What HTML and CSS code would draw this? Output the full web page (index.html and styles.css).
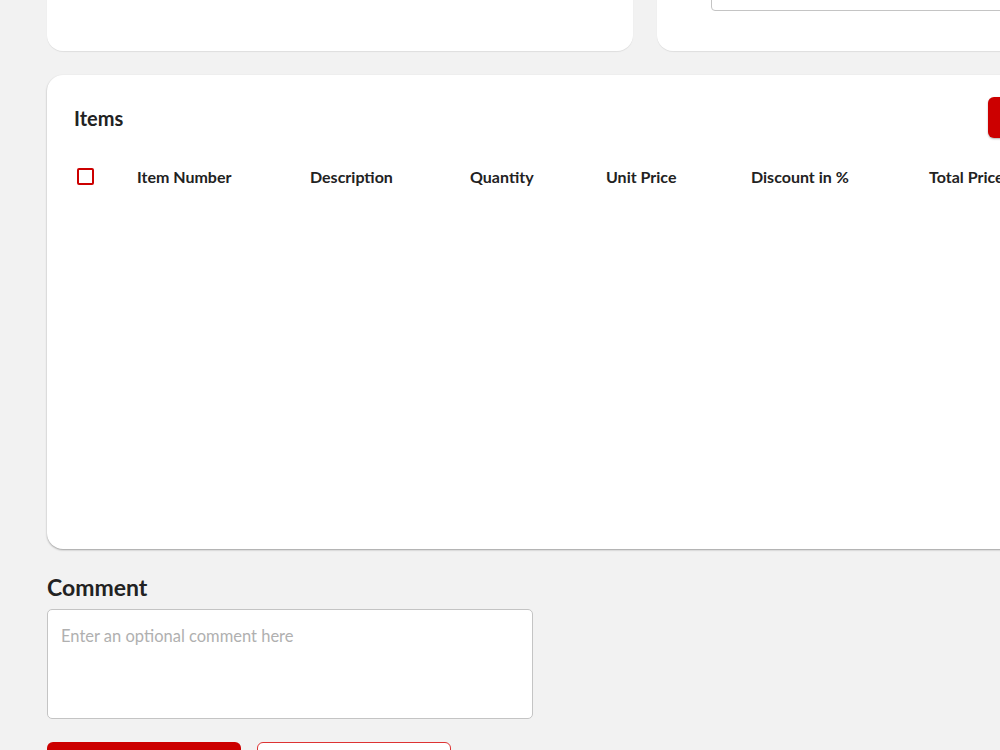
FILE: index.html
```html
<!DOCTYPE html>
<html lang="en">
<head>
    <meta charset="UTF-8">
    <title>New Order</title>
    <link rel="stylesheet" href="styles.css">
</head>
<body>
    <div class="page">
        <div class="top-row">
            <div class="card"></div>
            <div class="card card-form">
                <input class="text-input" type="text">
            </div>
        </div>

        <div class="card items-card">
            <div class="items-header">
                <h2>Items</h2>
                <button class="btn btn-primary">Add Item</button>
            </div>
            <div class="items-table">
                <div class="col-check"><span class="checkbox"></span></div>
                <div>Item Number</div>
                <div>Description</div>
                <div>Quantity</div>
                <div>Unit Price</div>
                <div>Discount in %</div>
                <div>Total Price</div>
            </div>
        </div>

        <div class="comment">
            <h2>Comment</h2>
            <textarea placeholder="Enter an optional comment here"></textarea>
        </div>

        <div class="actions">
            <button class="btn btn-primary">Submit Order</button>
            <button class="btn btn-outline">Cancel</button>
        </div>
    </div>
</body>
</html>
```

FILE: styles.css
```css
* {
    box-sizing: border-box;
}

html,
body {
    overflow: hidden;
}

body {
    margin: 0;
    font-family: Lato, "Open Sans", sans-serif;
    background-color: #f2f2f2;
    color: #222;
}

.page {
    width: 1196px;
    margin: -100px 0 0 47px;
    display: flex;
    flex-direction: column;
}

.top-row {
    display: grid;
    grid-template-columns: 1fr 1fr;
    gap: 24px;
}

.card {
    background-color: #fff;
    border-radius: 16px;
    box-shadow: 0 1px 1px rgba(0, 0, 0, 0.08);
}

.top-row .card {
    height: 151px;
}

.card-form {
    padding: 71px 0 0 54px;
}

.text-input {
    display: block;
    width: 500px;
    height: 40px;
    border: 1px solid #c4c4c4;
    border-radius: 4px;
}

.items-card {
    margin-top: 24px;
    height: 474px;
    padding: 22px 27px;
    box-shadow: 0 1px 2px rgba(0, 0, 0, 0.35);
}

.items-header {
    display: flex;
    justify-content: space-between;
    align-items: center;
    height: 41px;
}

.items-header h2 {
    margin: 0;
    font-size: 20px;
    font-weight: 700;
}

.items-table {
    display: grid;
    grid-template-columns: 63px 173px 160px 136px 145px 178px 1fr;
    align-items: center;
    height: 40px;
    margin-top: 18px;
    font-size: 16px;
    font-weight: 700;
}

.col-check {
    padding-left: 3px;
    display: flex;
}

.checkbox {
    width: 17px;
    height: 17px;
    border: 2px solid #cc0000;
    border-radius: 2px;
}

.btn {
    height: 42px;
    padding: 0 20px;
    font-family: inherit;
    font-size: 15px;
    font-weight: 700;
    border-radius: 6px;
    cursor: pointer;
}

.btn-primary {
    background-color: #cc0000;
    border: none;
    color: #fff;
}

.items-header .btn-primary {
    width: 228px;
    height: 41px;
    box-shadow: 0 1px 2px rgba(0, 0, 0, 0.3);
}

.btn-outline {
    background-color: #fff;
    border: 1px solid #dd3333;
    color: #cc0000;
}

.comment {
    margin-top: 24px;
}

.comment h2 {
    margin: 0 0 8px;
    font-size: 23px;
    font-weight: 700;
    line-height: 28px;
}

.comment textarea {
    display: block;
    width: 486px;
    height: 110px;
    padding: 16px 13px 14px;
    border: 1px solid #c4c4c4;
    border-radius: 5px;
    font-family: inherit;
    font-size: 16.5px;
    resize: none;
}

.comment textarea::placeholder {
    color: #b0b0b0;
}

.actions {
    display: flex;
    gap: 16px;
    margin-top: 23px;
}

.actions .btn {
    width: 194px;
}
```
